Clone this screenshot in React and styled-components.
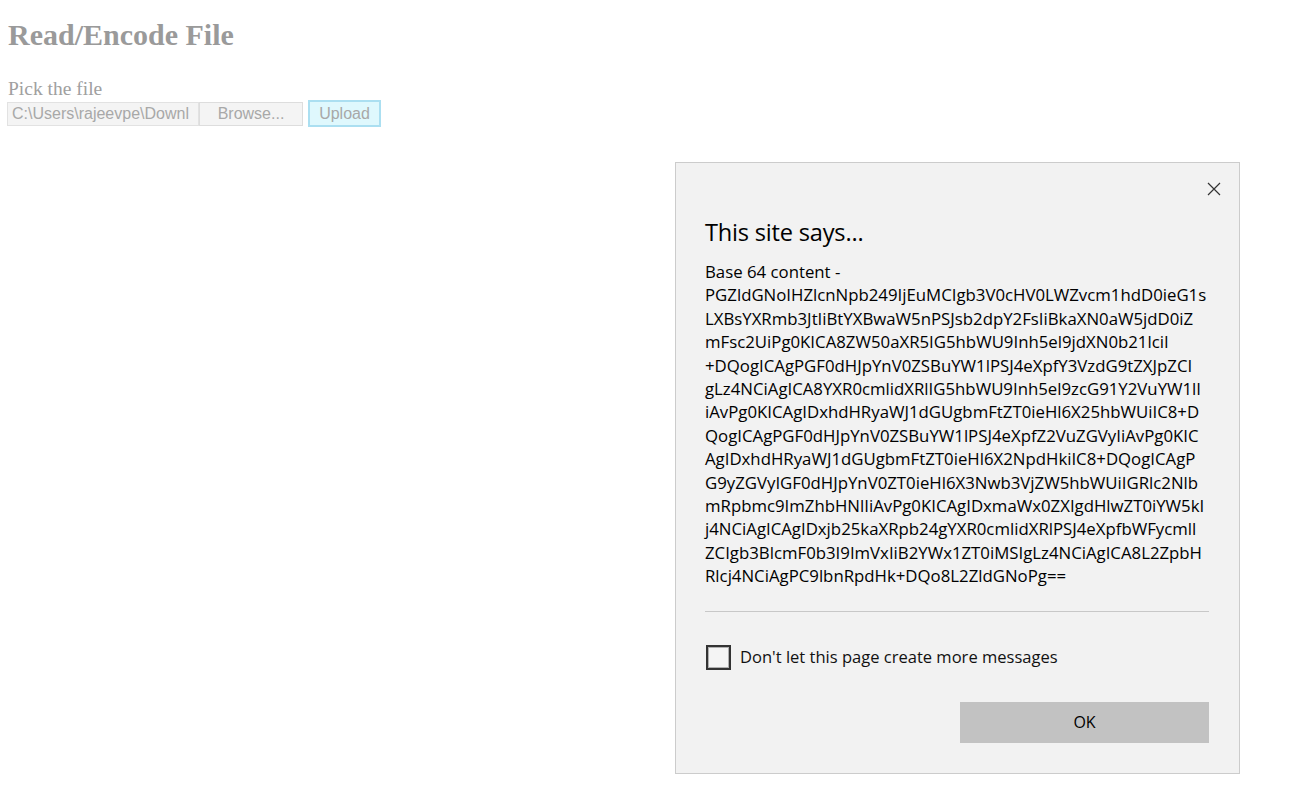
import React from "react";
import styled, { createGlobalStyle } from "styled-components";

const Global = createGlobalStyle`
  html, body { margin: 0; padding: 0; background: #ffffff; }
  body { font-family: "Liberation Serif", "Times New Roman", serif; }
  * { box-sizing: border-box; }
`;

const Page = styled.div`
  position: relative;
  width: 1298px;
  height: 798px;
  padding: 18px 8px 0 8px;
  overflow: hidden;
`;

const Heading = styled.h1`
  margin: 0;
  font-size: 30px;
  line-height: 34px;
  font-weight: bold;
  color: #9a9a9a;
`;

const Label = styled.div`
  margin-top: 27px;
  font-size: 19.5px;
  line-height: 20px;
  color: #a0a0a0;
`;

const UploadRow = styled.div`
  display: flex;
  align-items: center;
  margin-left: -1px;
  margin-top: 1px;
  height: 27px;
`;

const FileBox = styled.div`
  width: 192px;
  height: 24px;
  padding: 0 4px;
  background: #f4f4f4;
  border: 1px solid #e2e2e2;
  font-family: "Liberation Sans", Arial, sans-serif;
  font-size: 16px;
  line-height: 22px;
  color: #a8a8a8;
  white-space: nowrap;
  overflow: hidden;
`;

const PlainButton = styled.div`
  display: flex;
  align-items: center;
  justify-content: center;
  width: ${(p) => p.$w}px;
  height: ${(p) => p.$h}px;
  margin-left: ${(p) => p.$ml || 0}px;
  background: ${(p) => p.$bg};
  border: ${(p) => p.$bw}px solid ${(p) => p.$bc};
  font-family: "Liberation Sans", Arial, sans-serif;
  font-size: 16px;
  color: #a8a8a8;
`;

const Dialog = styled.div`
  position: absolute;
  left: 675px;
  top: 162px;
  width: 565px;
  height: 612px;
  background: #f2f2f2;
  border: 1px solid #cccccc;
  padding: 53px 30px 29px 29px;
  display: flex;
  flex-direction: column;
  font-family: "Open Sans", "Noto Sans", sans-serif;
  color: #000;
`;

const Close = styled.div`
  position: absolute;
  top: 18px;
  right: 17px;
  width: 16px;
  height: 16px;
  display: flex;
`;

const Title = styled.div`
  font-size: 23.6px;
  line-height: 32px;
  letter-spacing: -0.2px;
`;

const Body = styled.div`
  margin-top: 12px;
  font-size: 16.8px;
  line-height: 23.4px;
`;

const Line = styled.div`
  white-space: nowrap;
`;

const Separator = styled.div`
  margin-top: 23px;
  height: 1px;
  background: #c8c8c8;
`;

const CheckRow = styled.div`
  display: flex;
  align-items: center;
  margin-top: 33px;
  gap: 9px;
  padding-left: 1px;
`;

const Box = styled.div`
  width: 25px;
  height: 25px;
  border: 2px solid #333333;
  box-shadow: inset 0 0 0 1px #b0b0b0;
  background: #f4f4f4;
`;

const CheckLabel = styled.div`
  font-size: 16.55px;
  line-height: 24px;
  color: #111;
`;

const Footer = styled.div`
  display: flex;
  justify-content: flex-end;
  margin-top: 32px;
`;

const OkButton = styled.div`
  width: 249px;
  height: 41px;
  background: #c2c2c2;
  display: flex;
  align-items: center;
  justify-content: center;
  font-size: 16px;
  color: #000;
`;

const lines = [
  "Base 64 content -",
  "PGZldGNoIHZlcnNpb249IjEuMCIgb3V0cHV0LWZvcm1hdD0ieG1s",
  "LXBsYXRmb3JtIiBtYXBwaW5nPSJsb2dpY2FsIiBkaXN0aW5jdD0iZ",
  "mFsc2UiPg0KICA8ZW50aXR5IG5hbWU9Inh5el9jdXN0b21lciI",
  "+DQogICAgPGF0dHJpYnV0ZSBuYW1lPSJ4eXpfY3VzdG9tZXJpZCI",
  "gLz4NCiAgICA8YXR0cmlidXRlIG5hbWU9Inh5el9zcG91Y2VuYW1lI",
  "iAvPg0KICAgIDxhdHRyaWJ1dGUgbmFtZT0ieHl6X25hbWUiIC8+D",
  "QogICAgPGF0dHJpYnV0ZSBuYW1lPSJ4eXpfZ2VuZGVyIiAvPg0KIC",
  "AgIDxhdHRyaWJ1dGUgbmFtZT0ieHl6X2NpdHkiIC8+DQogICAgP",
  "G9yZGVyIGF0dHJpYnV0ZT0ieHl6X3Nwb3VjZW5hbWUiIGRlc2Nlb",
  "mRpbmc9ImZhbHNlIiAvPg0KICAgIDxmaWx0ZXIgdHlwZT0iYW5kI",
  "j4NCiAgICAgIDxjb25kaXRpb24gYXR0cmlidXRlPSJ4eXpfbWFycmll",
  "ZCIgb3BlcmF0b3I9ImVxIiB2YWx1ZT0iMSIgLz4NCiAgICA8L2ZpbH",
  "Rlcj4NCiAgPC9lbnRpdHk+DQo8L2ZldGNoPg==",
];

export default function App() {
  return (
    <>
      <Global />
      <Page>
        <Heading>Read/Encode File</Heading>
        <Label>Pick the file</Label>
        <UploadRow>
          <FileBox>C:\Users\rajeevpe\Downl</FileBox>
          <PlainButton $w={104} $h={24} $bg="#f4f4f4" $bw={1} $bc="#dddddd">
            Browse...
          </PlainButton>
          <PlainButton $w={73} $h={27} $ml={5} $bg="#dff8fd" $bw={2} $bc="#abdff1">
            Upload
          </PlainButton>
        </UploadRow>
        <Dialog>
          <Close>
            <svg width="16" height="16" viewBox="0 0 16 16">
              <path d="M2 2 L14 14 M14 2 L2 14" stroke="#333" strokeWidth="1.2" fill="none" />
            </svg>
          </Close>
          <Title>This site says...</Title>
          <Body>
            {lines.map((l, i) => (
              <Line key={i}>{l}</Line>
            ))}
          </Body>
          <Separator />
          <CheckRow>
            <Box />
            <CheckLabel>Don't let this page create more messages</CheckLabel>
          </CheckRow>
          <Footer>
            <OkButton>OK</OkButton>
          </Footer>
        </Dialog>
      </Page>
    </>
  );
}
